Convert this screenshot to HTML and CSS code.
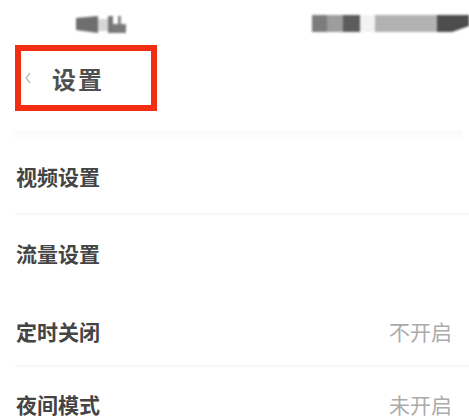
FILE: index.html
```html
<!DOCTYPE html>
<html lang="zh">
<head>
<meta charset="utf-8">
<link rel="stylesheet" href="styles.css">
</head>
<body>
<div class="screen">
  <div class="status">
    <svg class="sb-left" width="50" height="17" viewBox="0 0 50 17">
      <polygon points="0,2 22,0 22,17 0,14" fill="#6e6e6e"/>
      <rect x="22" y="3" width="10" height="12" fill="#d6d6d6"/>
      <rect x="32" y="0" width="5" height="17" fill="#777"/>
      <rect x="37" y="8" width="13" height="9" fill="#7a7a7a"/>
      <rect x="42" y="0" width="3" height="8" fill="#888"/>
    </svg>
    <svg class="sb-right" width="157" height="17" viewBox="0 0 157 17">
      <rect x="0" y="0" width="15" height="17" fill="#7c7c7c"/>
      <rect x="15" y="0" width="16" height="17" fill="#9d9d9d"/>
      <rect x="31" y="0" width="17" height="17" fill="#5c5c5c"/>
      <rect x="48" y="0" width="15" height="17" fill="#f3f3f3"/>
      <rect x="63" y="0" width="62" height="17" fill="#b2b2b2"/>
      <polygon points="125,0 157,0 157,11 140,17 125,17" fill="#4c4c4c"/>
    </svg>
  </div>
  <div class="header">
    <div class="title-box">
      <svg class="back" width="6" height="12" viewBox="0 0 6 12"><polyline points="5,1 1,6 5,11" fill="none" stroke="#bbb" stroke-width="1.3"/></svg>
      <span class="title">设置</span>
    </div>
  </div>
  <div class="band"></div>
  <div class="list">
    <div class="row sep"><span class="label">视频设置</span></div>
    <div class="row"><span class="label">流量设置</span></div>
    <div class="row sep row3"><span class="label">定时关闭</span><span class="value">不开启</span></div>
    <div class="row last"><span class="label">夜间模式</span><span class="value">未开启</span></div>
  </div>
</div>
</body>
</html>
```
FILE: styles.css
```css
html, body {
  margin: 0;
  padding: 0;
  background: #fff;
}
body {
  font-family: "Noto Sans CJK SC", "Noto Sans", sans-serif;
  width: 469px;
  height: 419px;
  overflow: hidden;
}
.screen {
  display: flex;
  flex-direction: column;
}
.status {
  height: 45px;
  box-sizing: border-box;
  padding: 15px 0 0 76px;
  display: flex;
  justify-content: space-between;
  align-items: flex-start;
}
.status svg {
  display: block;
  filter: blur(0.8px);
}
.sb-left { margin-top: 1px; }
.header {
  padding-left: 15px;
}
.title-box {
  width: 142px;
  height: 66px;
  box-sizing: border-box;
  border: 6px solid #f22d12;
  display: flex;
  align-items: center;
  padding-left: 4px;
}
.back {
  display: block;
  margin-right: 21px;
}
.title {
  font-size: 24px;
  font-weight: 700;
  color: #505050;
  line-height: 1;
  letter-spacing: 2px;
  margin-top: 2px;
}
.band {
  margin: 19px 6px 0 15px;
  height: 9px;
  background: #fbfbfb;
}
.list {
  padding-left: 15px;
}
.row {
  height: 76px;
  box-sizing: border-box;
  display: flex;
  align-items: center;
  justify-content: space-between;
  padding: 0 17px 0 1px;
}
.row.sep {
  border-bottom: 2px solid #f7f7f7;
}
.row3 {
  padding-top: 6px;
}
.row.last {
  height: 50px;
  align-items: flex-end;
  padding-bottom: 2px;
}
.label {
  font-size: 21px;
  font-weight: 700;
  color: #444;
  line-height: 1;
}
.value {
  font-size: 21px;
  color: #ababab;
  line-height: 1;
}
```
